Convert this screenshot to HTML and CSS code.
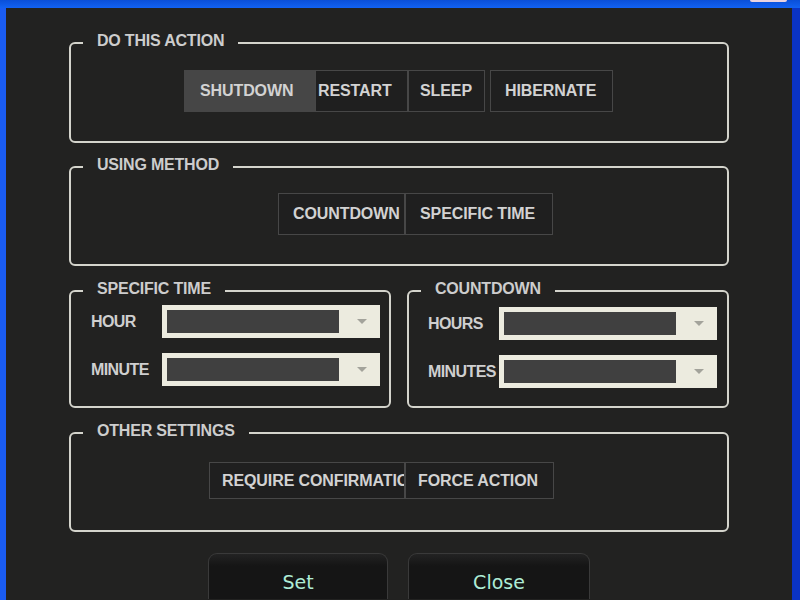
FILE: index.html
```html
<!DOCTYPE html>
<html>
<head>
	<title>Shutdown Timer</title>
	<link rel="stylesheet" href="styles.css">
</head>
<body>
	<div class="titlebar">
		<div class="tb-close"></div>
	</div>
	<div class="frame">
		<fieldset class="group group-action">
			<legend>DO THIS ACTION</legend>
			<div class="options">
				<div class="opt opt-shutdown active">SHUTDOWN</div>
				<div class="opt opt-restart">RESTART</div>
				<div class="opt opt-sleep">SLEEP</div>
				<div class="opt opt-hibernate">HIBERNATE</div>
			</div>
		</fieldset>

		<fieldset class="group group-method">
			<legend>USING METHOD</legend>
			<div class="options">
				<div class="opt opt-countdown">COUNTDOWN</div>
				<div class="opt opt-specific">SPECIFIC TIME</div>
			</div>
		</fieldset>

		<div class="time-row">
			<fieldset class="group group-time">
				<legend>SPECIFIC TIME</legend>
				<div class="field">
					<span class="field-label">HOUR</span>
					<div class="select"><div class="select-value"></div><div class="select-arrow"></div></div>
				</div>
				<div class="field">
					<span class="field-label">MINUTE</span>
					<div class="select"><div class="select-value"></div><div class="select-arrow"></div></div>
				</div>
			</fieldset>
			<fieldset class="group group-time group-count">
				<legend>COUNTDOWN</legend>
				<div class="field">
					<span class="field-label">HOURS</span>
					<div class="select"><div class="select-value"></div><div class="select-arrow"></div></div>
				</div>
				<div class="field">
					<span class="field-label">MINUTES</span>
					<div class="select"><div class="select-value"></div><div class="select-arrow"></div></div>
				</div>
			</fieldset>
		</div>

		<fieldset class="group group-other">
			<legend>OTHER SETTINGS</legend>
			<div class="options">
				<div class="opt opt-confirm">REQUIRE CONFIRMATION</div>
				<div class="opt opt-force">FORCE ACTION</div>
			</div>
		</fieldset>

		<div class="actions">
			<button class="big-btn btn-set">Set</button>
			<button class="big-btn btn-close">Close</button>
		</div>
	</div>
</body>
</html>
```

FILE: styles.css
```css
body {
	margin: 0;
	padding: 0;
	background-color: #222221;
	font-family: "Liberation Sans", Arial, sans-serif;
	overflow: hidden;
}

.titlebar {
	height: 8px;
	background: linear-gradient(to bottom, #0a4fd8, #1262f2);
	display: flex;
	justify-content: flex-end;
}

.tb-close {
	width: 37px;
	height: 2px;
	margin-right: 13px;
	background-color: #e9d3e0;
	border-radius: 0 0 3px 3px;
}

.frame {
	height: 592px;
	box-sizing: border-box;
	border-left: 6px solid #1a5cf2;
	border-right: 8px solid #0a33c4;
	padding: 26px 63px 0 63px;
	background-color: #222221;
}

.group {
	margin: 0;
	padding: 0;
	border: 2px solid #d4d4cc;
	border-radius: 6px;
	min-width: 0;
}

.group legend {
	margin-left: 12px;
	padding: 0 14px;
	line-height: 18px;
	font-size: 16px;
	font-weight: bold;
	letter-spacing: -0.2px;
	color: #cdcdcd;
	position: relative;
	top: -2px;
}

.options {
	display: flex;
	height: 42px;
}

.group-action .options {
	margin: 18px 0 29px 113px;
}

.group-method {
	margin-top: 15px;
}

.group-method .options {
	margin: 17px 0 29px 207px;
}

.group-other {
	margin-top: 16px;
}

.group-other .options {
	height: 37px;
	margin: 20px 0 31px 138px;
}

.opt {
	box-sizing: border-box;
	height: 100%;
	display: flex;
	align-items: center;
	overflow: hidden;
	white-space: nowrap;
	border: 1px solid #474747;
	color: #d2d2d2;
	font-size: 16px;
	font-weight: bold;
	letter-spacing: -0.1px;
	background-color: #1f1f1f;
}

.opt.active {
	background-color: #464646;
	border-color: #464646;
}

.opt-shutdown { width: 131px; padding-left: 15px; }
.opt-restart { width: 93px; padding-left: 2px; }
.opt-sleep { width: 77px; padding-left: 11px; }
.opt-hibernate { width: 123px; padding-left: 14px; margin-left: 5px; }
.opt-countdown { width: 127px; padding-left: 14px; }
.opt-specific { width: 148px; padding-left: 14px; }
.opt-confirm { width: 196px; padding-left: 12px; }
.opt-force { width: 149px; padding-left: 12px; }

.time-row {
	display: flex;
	gap: 16px;
	margin-top: 16px;
}

.group-time {
	flex: 1 1 0;
	padding: 5px 0 20px 0;
}

.group-time .field {
	margin-left: 20px;
}

.group-count {
	padding-top: 7px;
	padding-bottom: 18px;
}

.group-count .field {
	margin-left: 19px;
}

.field {
	display: flex;
	align-items: center;
	height: 33px;
}

.field + .field {
	margin-top: 15px;
}

.field-label {
	width: 71px;
	color: #cfcfcf;
	font-size: 16px;
	font-weight: bold;
	letter-spacing: -0.6px;
	white-space: nowrap;
}

.select {
	box-sizing: border-box;
	width: 218px;
	height: 33px;
	padding: 5px;
	background-color: #ecebdf;
	display: flex;
	align-items: center;
}

.select-value {
	width: 172px;
	height: 100%;
	background-color: #404040;
}

.select-arrow {
	margin-left: 18px;
	width: 0;
	height: 0;
	border-left: 5px solid transparent;
	border-right: 5px solid transparent;
	border-top: 5px solid #a3a39b;
}

.actions {
	display: flex;
	justify-content: center;
	gap: 20px;
	margin-top: 21px;
}

.big-btn {
	height: 46px;
	padding: 11px 0 0 0;
	align-self: flex-start;
	background: linear-gradient(to bottom, #232323, #151515 12px);
	border: 1px solid #3a3a3a;
	border-bottom: none;
	border-radius: 9px 9px 0 0;
	color: #aeecd6;
	font-family: "DejaVu Sans", sans-serif;
	font-size: 19px;
	cursor: pointer;
}

.btn-set {
	width: 180px;
}

.btn-close {
	width: 182px;
}
```
